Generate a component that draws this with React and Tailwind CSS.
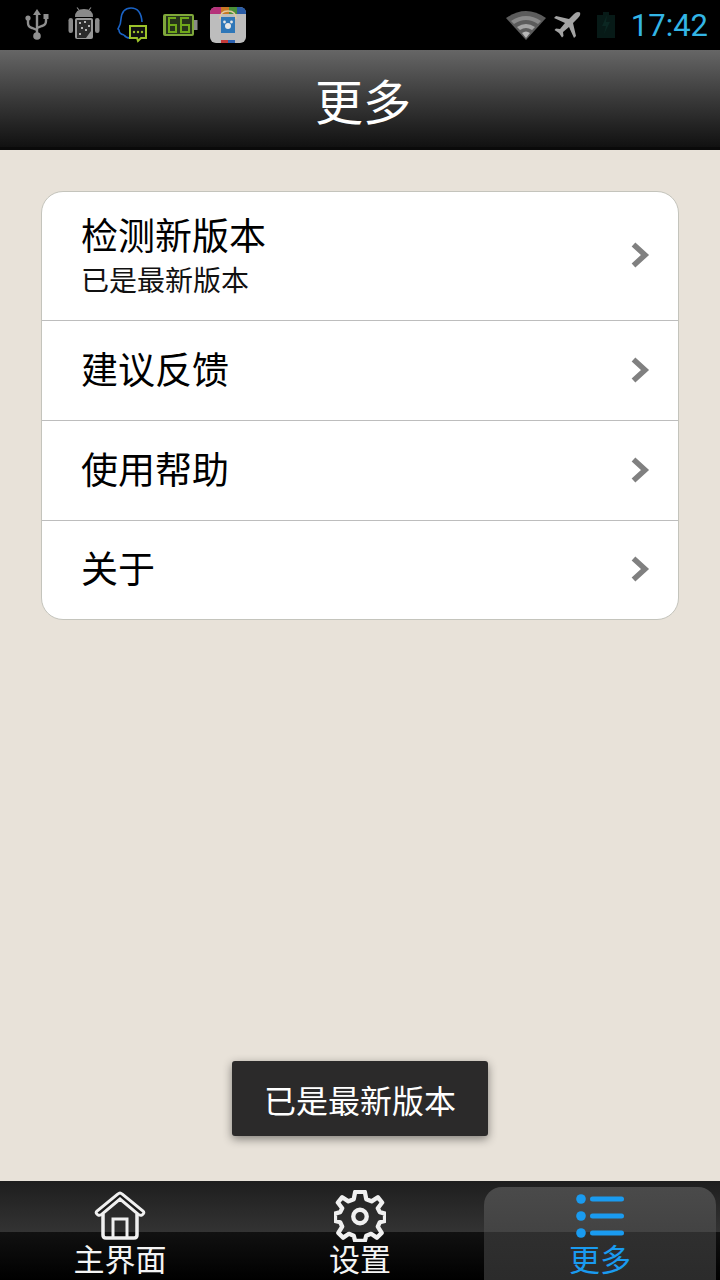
const cjk = "font-['Noto_Sans_CJK_SC','Liberation_Sans',sans-serif]";

function Chevron() {
  return (
    <svg width="20" height="28" viewBox="0 0 20 28" className="shrink-0 mb-[2px]">
      <path d="M3.5 3.5 L15 14 L3.5 24.5" fill="none" stroke="#808080" strokeWidth="5.5" />
    </svg>
  );
}

function UsbIcon() {
  return (
    <svg width="24" height="34" viewBox="0 0 24 34">
      <g fill="none" stroke="#8f8f8f" strokeWidth="2.4">
        <path d="M12 5 V26" />
        <path d="M3 11 V15 Q3 19 7 20 L12 22" />
        <path d="M21 9 V13 Q21 17 17 18 L12 20" />
      </g>
      <path d="M12 1 L16 7 H8 Z" fill="#8f8f8f" />
      <circle cx="3" cy="10" r="2.6" fill="#8f8f8f" />
      <rect x="18.5" y="6" width="5" height="5" fill="#8f8f8f" />
      <circle cx="12" cy="28" r="3.8" fill="#8f8f8f" />
    </svg>
  );
}

function AndroidIcon() {
  return (
    <svg width="32" height="36" viewBox="0 0 32 36">
      <path d="M11 3 L9 0.5 M21 3 L23 0.5" stroke="#8a8a8a" strokeWidth="1.2" />
      <path d="M7 10 Q7 2 16 2 Q25 2 25 10 Z" fill="#8a8a8a" />
      <rect x="0.5" y="11" width="4.5" height="15" rx="2.2" fill="#8a8a8a" />
      <rect x="27" y="11" width="4.5" height="15" rx="2.2" fill="#8a8a8a" />
      <rect x="7" y="11" width="18" height="21" rx="2" fill="#999999" />
      <path d="M9 13 H23 V24 L18 31 H9 Z" fill="#2b2b2b" />
      <g fill="#b5b5b5">
        <rect x="11" y="15" width="2" height="2" />
        <rect x="16" y="14" width="2" height="2" />
        <rect x="20" y="18" width="2" height="2" />
        <rect x="13" y="20" width="2" height="2" />
        <rect x="17" y="22" width="2" height="2" />
        <rect x="11" y="26" width="2" height="2" />
      </g>
    </svg>
  );
}

function HeadIcon() {
  return (
    <svg width="32" height="38" viewBox="0 0 32 38">
      <path d="M8 29 Q3 28 3 24 L2 23 Q5 18 5 13 Q6 2 15 2 Q25 2 26 16" fill="none" stroke="#1a62c4" strokeWidth="1.6" />
      <path d="M8 29 Q10 32 14 32" fill="none" stroke="#1a62c4" strokeWidth="1.6" />
      <path d="M14 20 H30 V32 H25 L22 35 L21 32 H14 Z" fill="#111" stroke="#9cc22a" strokeWidth="2" />
      <g fill="#9cc22a">
        <circle cx="18" cy="26" r="1.2" />
        <circle cx="22" cy="26" r="1.2" />
        <circle cx="26" cy="26" r="1.2" />
      </g>
    </svg>
  );
}

function BatteryDigits() {
  return (
    <svg width="36" height="24" viewBox="0 0 36 24">
      <rect x="0" y="1" width="31" height="22" rx="2" fill="#7fa83a" />
      <rect x="31" y="7" width="3.5" height="10" fill="#8a8a8a" />
      <rect x="3" y="3" width="26" height="18" fill="#26331a" />
      <g fill="none" stroke="#6fa81a" strokeWidth="2">
        <path d="M13 5 H6 V19 H13 V12 H6" />
        <path d="M26 5 H18 V19 H26 V12 H18" />
      </g>
    </svg>
  );
}

function StoreIcon() {
  return (
    <svg width="36" height="36" viewBox="0 0 36 36">
      <rect x="0" y="0" width="36" height="36" rx="6" fill="#bdbdbd" />
      <path d="M0 6 Q0 0 6 0 H11 V7 H0 Z" fill="#b5327a" />
      <rect x="11" y="0" width="8" height="7" fill="#c97826" />
      <rect x="19" y="0" width="8" height="7" fill="#4a9038" />
      <path d="M27 0 H30 Q36 0 36 6 V7 H27 Z" fill="#2a5ca6" />
      <path d="M10 12 Q10 4 18 4 Q26 4 26 12" fill="none" stroke="#e0c9a0" strokeWidth="1.6" />
      <rect x="11" y="10" width="14" height="16" fill="#2f77b8" />
      <circle cx="18" cy="19" r="3" fill="#e8e8e8" />
      <circle cx="14.5" cy="15" r="1.4" fill="#e8e8e8" />
      <circle cx="21.5" cy="15" r="1.4" fill="#e8e8e8" />
      <rect x="11" y="33" width="7" height="3" fill="#c43a3a" />
      <rect x="18" y="33" width="7" height="3" fill="#2c62b0" />
    </svg>
  );
}

function WifiIcon() {
  return (
    <svg width="40" height="30" viewBox="0 0 40 30">
      <path d="M0 8 Q20 -6 40 8 L20 30 Z" fill="#5c5c5c" />
      <path d="M5 11 Q20 1 35 11 L32 14 Q20 6 8 14 Z" fill="#8a8a8a" />
      <path d="M11 17 Q20 11 29 17 L26 20 Q20 16 14 20 Z" fill="#a5a5a5" />
      <path d="M16 23 Q20 20 24 23 L20 28 Z" fill="#b8b8b8" />
    </svg>
  );
}

function PlaneIcon() {
  return (
    <svg width="28" height="28" viewBox="0 0 28 28">
      <path d="M27 1.5 Q24 0 21 3 L16 8 L3 5 L1 7 L12 12 L7 18 L3 17.5 L1.5 19 L6 22 L9 26.5 L10.5 25 L10 21 L16 16 L21 27 L23 25 L20 12 L25 7 Q28 4 27 1.5 Z" fill="#a3a3a3" />
    </svg>
  );
}

function DimBattery() {
  return (
    <svg width="22" height="26" viewBox="0 0 22 26">
      <path d="M8 0 H14 V3 H20 V26 H2 V3 H8 Z" fill="#071a17" />
      <path d="M12 3 L7 14 H11 L9 22 L15 10 H11 Z" fill="#0b2722" />
    </svg>
  );
}

function StatusBar() {
  return (
    <div className="h-[50px] shrink-0 bg-black flex items-center pl-[25px] pr-[12px]">
      <UsbIcon />
      <div className="ml-[19px]"><AndroidIcon /></div>
      <div className="ml-[16px]"><HeadIcon /></div>
      <div className="ml-[15px]"><BatteryDigits /></div>
      <div className="ml-[11px]"><StoreIcon /></div>
      <div className="ml-auto flex items-center">
        <WifiIcon />
        <div className="ml-[7px]"><PlaneIcon /></div>
        <div className="ml-[14px]"><DimBattery /></div>
        <span className="ml-[14px] mt-[1px] text-[31px] leading-none text-[#33b5e5] font-['Roboto',sans-serif] font-normal">17:42</span>
      </div>
    </div>
  );
}

function Row({ title, sub, height }) {
  return (
    <div className={`${height} flex items-center pl-[39px] pr-[28px] border-b border-[#bdbdbd] last:border-b-0`}>
      <div className={`flex-1 min-w-0 ${sub ? "pb-[4px]" : "pb-[6px]"}`}>
        <div className="text-[37px] leading-[44px] text-black">{title}</div>
        {sub && <div className="mt-[5px] text-[28px] leading-[36px] text-[#111]">{sub}</div>}
      </div>
      <Chevron />
    </div>
  );
}

function HomeIcon() {
  return (
    <svg width="54" height="50" viewBox="0 0 54 50">
      <path d="M10 23 V44 Q10 47 13 47 H41 Q44 47 44 44 V23" fill="none" stroke="#f0f0f0" strokeWidth="3.5" />
      <path d="M5 24 Q2 22 4 20 L25 3 Q27 1 29 3 L50 20 Q52 22 49 24 Q47 25 45 23 L27 8 L9 23 Q7 25 5 24 Z" fill="#1c1c1c" stroke="#f0f0f0" strokeWidth="3" />
      <path d="M20 47 V28 H34 V47" fill="none" stroke="#f0f0f0" strokeWidth="3" />
    </svg>
  );
}

function GearIcon() {
  return (
    <svg width="52" height="52" viewBox="0 0 54 54">
      <path
        d="M22 2 H32 L33.5 9.5 L39 11.8 L45.5 7.5 L50 13 L45.5 19 L47.5 23 L53 24.5 V32 L47.5 33.5 L45.5 38 L49.5 44.5 L44.5 49.5 L38.5 45.5 L33.5 47.5 L32 53 H22 L20.5 47.5 L15.5 45.5 L9.5 49.5 L4.5 44.5 L8.5 38 L6.5 33.5 L1 32 V24.5 L6.5 23 L8.5 19 L4 13 L8.5 7.5 L15 11.8 L20.5 9.5 Z"
        fill="none"
        stroke="#f0f0f0"
        strokeWidth="4.5"
        strokeLinejoin="round"
      />
      <circle cx="27" cy="27.5" r="7" fill="none" stroke="#f0f0f0" strokeWidth="4.5" />
    </svg>
  );
}

function ListIcon() {
  return (
    <svg width="50" height="46" viewBox="0 0 50 46">
      <g fill="#1a9bf0">
        <circle cx="6" cy="6" r="4.8" />
        <circle cx="6" cy="23" r="4.8" />
        <circle cx="6" cy="40" r="4.8" />
        <rect x="15" y="3.5" width="34" height="5" rx="2.5" />
        <rect x="15" y="20.5" width="34" height="5" rx="2.5" />
        <rect x="15" y="37.5" width="34" height="5" rx="2.5" />
      </g>
    </svg>
  );
}

function Tab({ icon, label, active }) {
  return (
    <div className={`flex-1 flex flex-col items-center justify-end h-[93px] rounded-t-[18px] ${active ? "bg-[linear-gradient(#4a4a4a,#434343_48.4%,#2f2f2f_48.4%,#2b2b2b)] text-[#1a9bf0]" : "text-[#f4f4f4]"}`}>
      <div className="h-[50px] pt-[2px] flex items-center justify-center">{icon}</div>
      <div className="text-[31px] leading-[36px] mb-[4px]">{label}</div>
    </div>
  );
}

export default function App() {
  return (
    <div className={`relative w-[720px] h-[1280px] overflow-hidden flex flex-col bg-[#e8e2d9] ${cjk}`}>
      <StatusBar />

      <div className="h-[100px] shrink-0 flex items-center justify-center pl-[6px] border-b-[3px] border-[#0a0a0a] bg-[linear-gradient(#666666,#3a3a3a_50%,#111111)]">
        <h1 className="text-[48px] leading-none font-normal text-white">更多</h1>
      </div>

      <div className="flex-1 px-[41px] pt-[41px]">
        <div className="bg-white rounded-[22px] border border-[#c4c4bc] overflow-hidden">
          <Row title="检测新版本" sub="已是最新版本" height="h-[129px]" />
          <Row title="建议反馈" height="h-[100px]" />
          <Row title="使用帮助" height="h-[100px]" />
          <Row title="关于" height="h-[98px]" />
        </div>
      </div>

      <div className="h-[99px] shrink-0 flex px-[4px] pt-[6px] gap-[8px] bg-[linear-gradient(#1e1e1e,#333333_51.5%,#111111_51.5%,#000000)]">
        <Tab icon={<HomeIcon />} label="主界面" />
        <Tab icon={<GearIcon />} label="设置" />
        <Tab icon={<ListIcon />} label="更多" active />
      </div>

      <div className="absolute left-[232px] top-[1061px] w-[256px] h-[75px] rounded-[3px] bg-[#2b2a2a] flex items-center justify-center text-[32px] text-white shadow-[0_3px_10px_rgba(0,0,0,0.45)]">
        已是最新版本
      </div>
    </div>
  );
}
